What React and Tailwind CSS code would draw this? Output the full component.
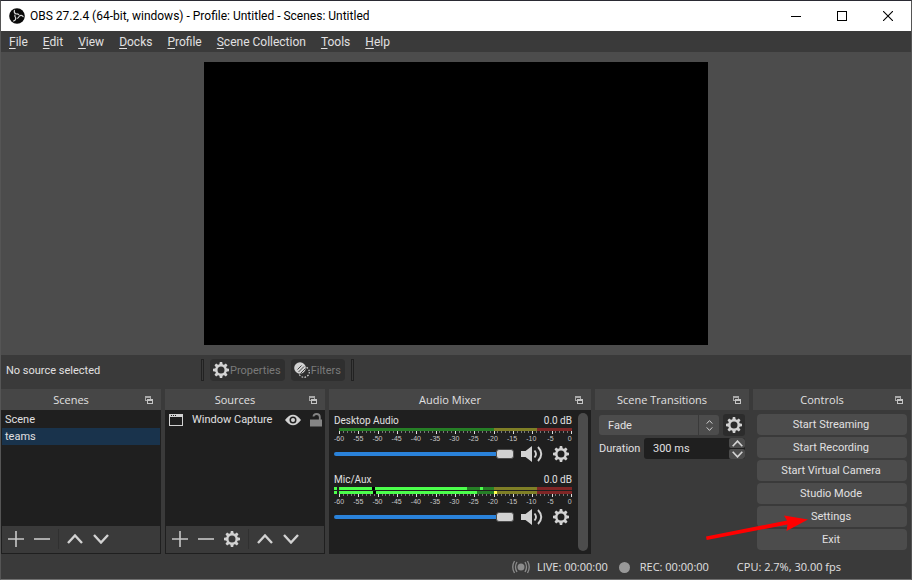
import React, { useState } from 'react';

const menus = ['File', 'Edit', 'View', 'Docks', 'Profile', 'Scene Collection', 'Tools', 'Help'];
const controls = ['Start Streaming', 'Start Recording', 'Start Virtual Camera', 'Studio Mode', 'Settings', 'Exit'];

const ObsLogo = () => (
  <svg width="16" height="16" viewBox="0 0 16 16" aria-hidden="true">
    <circle cx="8" cy="8" r="7.8" fill="#0a0a0a" />
    {[0, 120, 240].map((a) => (
      <path
        key={a}
        d="M9.800 6.600 Q8.800 5.600 7.200 6 Q4.600 5.200 5.400 2.400"
        fill="none"
        stroke="#d8d8d8"
        strokeWidth="1.1"
        strokeLinecap="round"
        transform={`rotate(${a} 8 8)`}
      />
    ))}
  </svg>
);

const GearIcon = ({ size = 16 }) => (
  <svg width={size} height={size} viewBox="0 0 16 16" fill="currentColor" aria-hidden="true">
    {[0, 45, 90, 135, 180, 225, 270, 315].map((a) => (
      <path key={a} d="M6.3 3 L6.8 0 H9.2 L9.7 3 Z" transform={`rotate(${a} 8 8)`} />
    ))}
    <circle cx="8" cy="8" r="4.7" fill="none" stroke="currentColor" strokeWidth="2.4" />
  </svg>
);

const FiltersIcon = () => (
  <svg width="16" height="16" viewBox="0 0 16 16" aria-hidden="true">
    <circle cx="10" cy="10" r="5.3" fill="none" stroke="#d2d2d2" strokeWidth="1.2" strokeDasharray="1.6 1.4" />
    <circle cx="6" cy="6" r="5.8" fill="#d2d2d2" />
    <path d="M4.500 10 L10 4.500 M6.500 11.500 L11.500 6.500 M3.500 7.500 L7.500 3.500" stroke="#2e2e2e" strokeWidth="0.9" />
  </svg>
);

const SpeakerIcon = () => (
  <svg width="22" height="16" viewBox="0 0 22 16" aria-hidden="true">
    <path d="M0 5 H4.500 L11 0 V16 L4.500 11 H0 Z" fill="#d2d2d2" />
    <path d="M13.500 4.500 Q16.500 8 13.500 11.500 M17 1 Q23.500 8 17 15" fill="none" stroke="#d2d2d2" strokeWidth="1.9" />
  </svg>
);

const PlusIcon = () => (
  <svg width="16" height="16" viewBox="0 0 16 16" aria-hidden="true">
    <path d="M8 0 V16 M0 8 H16" stroke="#c8c8c8" strokeWidth="1.6" />
  </svg>
);

const MinusIcon = () => (
  <svg width="16" height="16" viewBox="0 0 16 16" aria-hidden="true">
    <path d="M0 8 H16" stroke="#c8c8c8" strokeWidth="1.6" />
  </svg>
);

const ChevronIcon = ({ down, width = 16, height = 10, stroke = 2.4 }) => (
  <svg width={width} height={height} viewBox="0 0 16 10" aria-hidden="true">
    <path
      d={down ? 'M1 1 L8 8.500 L15 1' : 'M1 9 L8 1.500 L15 9'}
      fill="none"
      stroke="#d2d2d2"
      strokeWidth={stroke}
    />
  </svg>
);

const FloatIcon = () => (
  <svg width="8" height="8" viewBox="0 0 8 8" shapeRendering="crispEdges" aria-hidden="true">
    <path d="M0 0 H6 V3 H5 V2 H1 V4 H2 V5 H0 Z" fill="#a8a8a8" />
    <path d="M2 3 H8 V8 H2 Z M3 5 V7 H7 V5 Z" fill="#c4c4c4" fillRule="evenodd" />
  </svg>
);

const Dock = ({ title, children }) => (
  <section className="flex min-w-0 flex-col">
    <header className="flex h-[21px] shrink-0 items-center gap-1 bg-[#464646] pr-2 font-['Open_Sans',sans-serif]">
      <h2 className="flex-1 truncate text-center">{title}</h2>
      <button type="button" aria-label={`Float ${title}`}><FloatIcon /></button>
    </header>
    {children}
  </section>
);

const ListToolbar = ({ name, withGear }) => (
  <div className="m-px mt-0 flex h-[27px] items-center gap-[10px] bg-[#3a3a3a] pb-px pl-[6px] text-[#d2d2d2]">
    <button type="button" aria-label={`Add ${name}`}><PlusIcon /></button>
    <button type="button" aria-label={`Remove ${name}`}><MinusIcon /></button>
    {withGear && <button type="button" aria-label={`${name} properties`}><GearIcon /></button>}
    <div className="-mx-[2px] h-5 w-px bg-[#303030]" />
    <button type="button" aria-label={`Move ${name} up`}><ChevronIcon /></button>
    <button type="button" aria-label={`Move ${name} down`}><ChevronIcon down /></button>
  </div>
);

const pct = (db) => `${((db + 60) / 60) * 100}%`;

// One channel row: zone colours first, then the live level and peak marks on top.
const MeterBar = ({ y, level }) => (
  <g>
    <rect x="0" y={y} width="100%" height="3" fill="#7f2626" />
    <rect x="0" y={y} width={pct(-9)} height="3" fill="#7f7f26" />
    <rect x="0" y={y} width={pct(-20)} height="3" fill="#267f26" />
    {level && (
      <>
        <rect x="-5" y={y} width="3" height="3" fill="#4cff4c" />
        <rect x="0" y={y} width={pct(level.to)} height="3" fill="#4cff4c" />
        <rect x={pct(level.mag)} y={y} width="3" height="3" fill="#000000" />
        <rect x={pct(level.peak)} y={y} width="3" height="3" fill={level.peak > -20.5 ? '#ffff4c' : '#4cff4c'} />
      </>
    )}
  </g>
);

const Meter = ({ levels }) => {
  const stereo = levels.length > 1;
  const top = stereo ? 7 : 3;
  return (
    <div className="pl-[5px]">
      <svg className={stereo ? 'block h-[18px] w-full overflow-visible' : 'block h-[14px] w-full overflow-visible'} shapeRendering="crispEdges" aria-hidden="true">
        {levels.map((level, i) => <MeterBar key={i} y={i * 4} level={level} />)}
        {Array.from({ length: 61 }, (_, i) => (
          <rect
            key={i}
            x={`${(i / 60) * 99.5}%`}
            y={top}
            width="1"
            height={i % 5 === 0 ? 3 : 2}
            fill={i % 5 === 0 ? '#e0e0e0' : '#777777'}
          />
        ))}
        {Array.from({ length: 13 }, (_, i) => (
          <text
            key={i}
            x={`${(i / 12) * 99}%`}
            y={top + 10}
            textAnchor="middle"
            className="fill-[#c8c8c8] font-['Liberation_Sans',sans-serif] text-[7px]"
          >
            {i === 12 ? '0' : i * 5 - 60}
          </text>
        ))}
      </svg>
    </div>
  );
};

const Channel = ({ name, levels }) => {
  const [volume, setVolume] = useState(100);
  return (
    <div>
      <div className="flex h-[14px] items-center justify-between text-[10px]">
        <span>{name}</span>
        <span>0.0 dB</span>
      </div>
      <Meter levels={levels} />
      <div className="flex h-6 items-center pr-[3px] text-[#d2d2d2]">
        <input
          type="range"
          aria-label={`${name} volume`}
          value={volume}
          onChange={(e) => setVolume(Number(e.target.value))}
          className="h-1 min-w-0 flex-1 appearance-none rounded-full bg-[#2a82da] [&::-webkit-slider-thumb]:h-[10px] [&::-webkit-slider-thumb]:w-[18px] [&::-webkit-slider-thumb]:appearance-none [&::-webkit-slider-thumb]:rounded-[3px] [&::-webkit-slider-thumb]:border [&::-webkit-slider-thumb]:border-[#4c4c4c] [&::-webkit-slider-thumb]:bg-[#d2d2d2]"
        />
        <button type="button" aria-label={`Mute ${name}`} className="ml-[7px]"><SpeakerIcon /></button>
        <button type="button" aria-label={`${name} options`} className="ml-[10px]"><GearIcon /></button>
      </div>
    </div>
  );
};

const TitleBar = () => (
  <header className="flex h-[30px] shrink-0 items-center bg-white pl-2 text-xs text-[#000000]">
    <ObsLogo />
    <h1 className="ml-[5px] flex-1 truncate">OBS 27.2.4 (64-bit, windows) - Profile: Untitled - Scenes: Untitled</h1>
    <button type="button" aria-label="Minimize" className="flex h-full w-[46px] items-center justify-center">
      <svg width="10" height="10" shapeRendering="crispEdges"><path d="M0 5 H10 V6 H0 Z" /></svg>
    </button>
    <button type="button" aria-label="Maximize" className="flex h-full w-[46px] items-center justify-center">
      <svg width="10" height="10"><rect x="0.500" y="0.500" width="9" height="9" fill="none" stroke="#000" /></svg>
    </button>
    <button type="button" aria-label="Close" className="flex h-full w-[46px] items-center justify-center">
      <svg width="10" height="10"><path d="M0 0 L10 10 M10 0 L0 10" stroke="#000" strokeWidth="1.100" /></svg>
    </button>
  </header>
);

const ContextBar = () => (
  <div className="flex h-[34px] shrink-0 items-center pb-1 pl-[5px] text-[#7a7a7a]">
    <span className="w-[195px] pt-[2px] text-[#e1e0e1]">No source selected</span>
    <div className="h-[22px] w-[3px] border border-[#222222]" />
    <button type="button" className="ml-[6px] flex h-[22px] items-center gap-px rounded-[4px] bg-[#2f2f2f] pr-1 pl-[3px]">
      <span className="text-[#d2d2d2]"><GearIcon /></span>
      <span className="pt-px">Properties</span>
    </button>
    <button type="button" className="ml-[6px] flex h-[22px] items-center gap-px rounded-[4px] bg-[#2f2f2f] pr-1 pl-[3px]">
      <FiltersIcon />
      <span className="pt-px">Filters</span>
    </button>
    <div className="ml-[6px] h-[22px] w-[3px] border border-[#222222]" />
  </div>
);

const Scenes = () => {
  const [selected, setSelected] = useState('teams');
  return (
    <Dock title="Scenes">
      <div className="flex flex-1 flex-col bg-[#1f1f1f]">
        <ul className="flex-1 p-px">
          {['Scene', 'teams'].map((s) => (
            <li key={s}>
              <button
                type="button"
                onClick={() => setSelected(s)}
                className={s === selected ? 'block h-[17px] w-full bg-[#19334c] pt-px pl-[3px] text-left' : 'block h-[17px] w-full pt-px pl-[3px] text-left'}
              >
                {s}
              </button>
            </li>
          ))}
        </ul>
        <ListToolbar name="scene" />
      </div>
    </Dock>
  );
};

const Sources = () => (
  <Dock title="Sources">
    <div className="flex flex-1 flex-col bg-[#1f1f1f]">
      <ul className="flex-1 p-px">
        <li className="flex h-[17px] items-center pr-[1px] pl-[3px]">
          <svg width="14" height="12" viewBox="0 0 14 12" shapeRendering="crispEdges" aria-hidden="true">
            <path d="M0 0 H14 V12 H0 Z M1 3 V11 H13 V3 Z M2 1 V2 H3 V1 Z M4 1 V2 H5 V1 Z M6 1 V2 H7 V1 Z" fill="#d2d2d2" fillRule="evenodd" />
          </svg>
          <span className="ml-[9px] flex-1 truncate pt-px">Window Capture</span>
          <button type="button" aria-label="Hide Window Capture">
            <svg width="16" height="12" viewBox="0 0 16 12" aria-hidden="true">
              <path d="M0 6 Q8 -4.500 16 6 Q8 16.500 0 6 Z" fill="#d2d2d2" />
              <circle cx="8" cy="6" r="3.500" fill="#1f1f1f" />
              <circle cx="8" cy="6" r="2" fill="#d2d2d2" />
            </svg>
          </button>
          <button type="button" aria-label="Lock Window Capture" className="ml-2">
            <svg width="14" height="14" viewBox="0 0 14 14" aria-hidden="true">
              <path d="M1 6.500 H13 V13.500 H1 Z" fill="#858585" />
              <path d="M4.500 3.500 Q4.500 1 7.500 1 Q10.800 1 10.800 4 V7" fill="none" stroke="#858585" strokeWidth="1.800" />
            </svg>
          </button>
        </li>
      </ul>
      <ListToolbar name="source" withGear />
    </div>
  </Dock>
);

const AudioMixer = () => (
  <Dock title="Audio Mixer">
    <div className="flex flex-1 bg-[#1f1f1f] py-[3px] pr-[3px] pl-[5px]">
      <div className="flex min-w-0 flex-1 flex-col gap-[7px] pt-px">
        <Channel name="Desktop Audio" levels={[null]} />
        <Channel
          name="Mic/Aux"
          levels={[
            { to: -27, mag: -51.5, peak: -23.7 },
            { to: -24.5, mag: -51.2, peak: -20.2 },
          ]}
        />
      </div>
      <div className="ml-[6px] w-[10px] rounded-full bg-[#4c4c4c]" />
    </div>
  </Dock>
);

const Transitions = () => (
  <Dock title="Scene Transitions">
    <div className="flex flex-col gap-[2px] px-1 pt-1">
      <div className="flex items-center gap-1">
        <div className="relative min-w-0 flex-1">
          <select aria-label="Transition" className="block h-5 w-full appearance-none rounded-[3px] bg-[#4c4c4c] pt-px pl-[9px]">
            <option>Fade</option>
          </select>
          <div className="pointer-events-none absolute inset-y-0 right-0 flex w-[21px] flex-col items-center justify-center gap-[3px] border-l border-[#3a3a3a]">
            <ChevronIcon width={7} height={4} stroke={2.5} />
            <ChevronIcon down width={7} height={4} stroke={2.5} />
          </div>
        </div>
        <button type="button" aria-label="Transition properties" className="flex h-[22px] w-[22px] items-center justify-center rounded-[3px] bg-[#2c2c2c] text-[#d2d2d2]">
          <GearIcon />
        </button>
      </div>
      <div className="flex h-[21px] items-center gap-1">
        <label htmlFor="duration" className="w-[41px] shrink-0 pt-px">Duration</label>
        <div className="flex h-full min-w-0 flex-1 overflow-hidden rounded-[3px] bg-[#1f1f1f]">
          <input id="duration" type="text" defaultValue="300 ms" className="min-w-0 flex-1 pt-px pl-[9px] outline-none" />
          <div className="flex w-4 flex-col gap-px bg-[#1f1f1f]">
            <button type="button" aria-label="Increase duration" className="flex flex-1 items-center justify-center rounded-[2px] bg-[#4c4c4c]"><ChevronIcon width={11} height={7} /></button>
            <button type="button" aria-label="Decrease duration" className="flex flex-1 items-center justify-center rounded-[2px] bg-[#4c4c4c]"><ChevronIcon down width={11} height={7} /></button>
          </div>
        </div>
      </div>
    </div>
  </Dock>
);

const Controls = () => (
  <Dock title="Controls">
    <div className="flex flex-col gap-[2px] px-1 pt-1">
      {controls.map((label) => (
        <div key={label} className="relative">
          <button type="button" className="block h-[21px] w-full rounded-[4px] bg-[#4c4c4c] pt-px pr-[2px] hover:bg-[#5a5a5a]">
            {label}
          </button>
          {label === 'Settings' && (
            <svg className="pointer-events-none absolute top-2 right-1/2 z-10 mr-6" width="102" height="26" viewBox="0 0 102 26" aria-hidden="true">
              <path d="M0 22.500 L81 6.500 L78 1.500 L102 5.500 L80.500 17 L81.500 10.500 L0.700 26 Z" fill="#ff0000" />
            </svg>
          )}
        </div>
      ))}
    </div>
  </Dock>
);

const StatusBar = () => (
  <footer className="flex h-[25px] shrink-0 items-center justify-end pt-px pr-[70px] font-['Open_Sans',sans-serif]">
    <svg width="18" height="14" viewBox="0 0 18 14" fill="none" stroke="#8c8c8c" strokeWidth="1.300" aria-hidden="true">
      <circle cx="9" cy="7" r="3.500" fill="#8c8c8c" stroke="none" />
      <path d="M5 2 Q2 7 5 12 M13 2 Q16 7 13 12 M2.500 1 Q-1 7 2.500 13 M15.500 1 Q19 7 15.500 13" />
    </svg>
    <span className="ml-[7px]">LIVE: 00:00:00</span>
    <div className="ml-[11px] h-[11px] w-[11px] rounded-full bg-[#999999]" />
    <span className="ml-[10px]">REC: 00:00:00</span>
    <span className="ml-7">CPU: 2.7%, 30.00 fps</span>
  </footer>
);

const App = () => {
  return (
    <div className="flex h-screen flex-col border border-t-[#2a2a33] border-r-[#555555] border-b-[#707070] border-l-[#555555] bg-[#3a3a3a] font-[Roboto,sans-serif] text-[11px] leading-4 text-[#e1e0e1]">
      <TitleBar />
      <nav className="flex h-[21px] shrink-0 items-center gap-[15px] pl-2 text-xs">
        {menus.map((m) => (
          <button key={m} type="button"><u className="underline-offset-2">{m[0]}</u>{m.slice(1)}</button>
        ))}
      </nav>
      <main className="flex min-h-0 flex-1 justify-center bg-[#4c4c4c] py-[10px]">
        <div className="aspect-video h-full bg-black" />
      </main>
      <ContextBar />
      <div className="grid h-[165px] shrink-0 grid-cols-[160fr_160fr_262fr_154fr_158fr] gap-1">
        <Scenes />
        <Sources />
        <AudioMixer />
        <Transitions />
        <Controls />
      </div>
      <StatusBar />
    </div>
  );
};

export default App;
